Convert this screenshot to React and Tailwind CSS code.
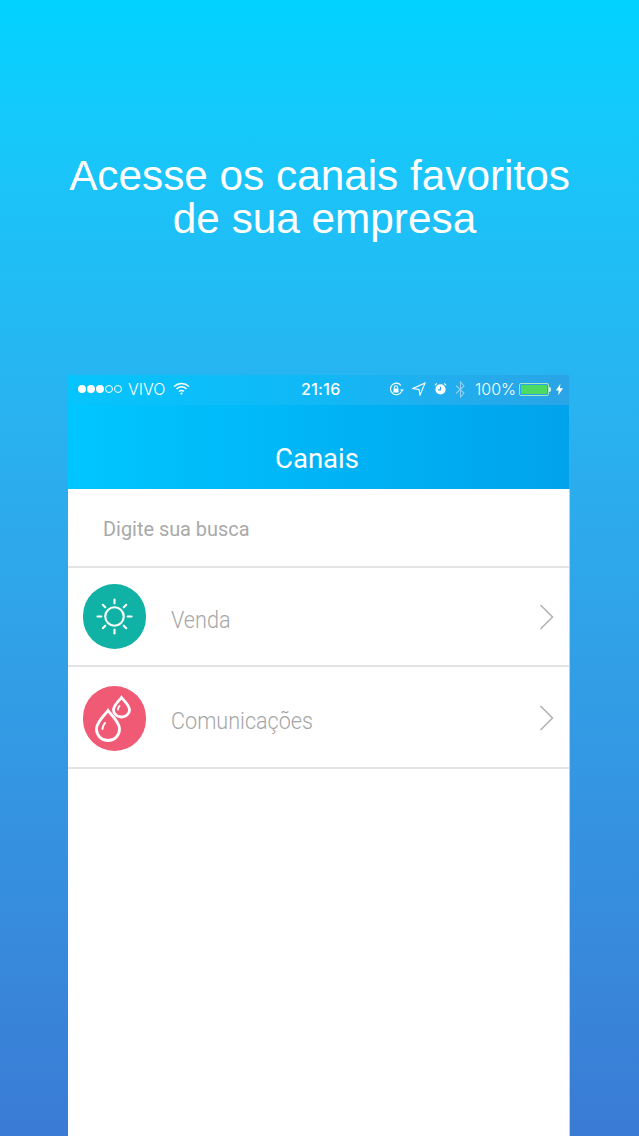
import React from 'react'

function StatusBar() {
  return (
    <div className="h-[30px] flex items-center pl-[10px] pb-[2px] text-white text-[16px] font-['Inter',sans-serif] bg-gradient-to-r from-[#06c4fc] via-[#10b8f6] to-[#2aa4e6]">
      <div className="flex items-center w-[223px]">
        <div className="flex items-center gap-[1px]">
          <span className="w-[8px] h-[8px] rounded-full bg-white"></span>
          <span className="w-[8px] h-[8px] rounded-full bg-white"></span>
          <span className="w-[8px] h-[8px] rounded-full bg-white"></span>
          <span className="w-[8px] h-[8px] rounded-full border border-white"></span>
          <span className="w-[8px] h-[8px] rounded-full border border-white"></span>
        </div>
        <span className="ml-[6px] font-light">VIVO</span>
        <svg className="ml-[8px] mb-[2px]" width="17" height="13" viewBox="0 0 17 13" fill="none" stroke="white" strokeWidth="1.5">
          <path d="M1 4.5C5.500 .5 11.500 .5 16 4.500" />
          <path d="M3.500 7C6.500 4.400 10.500 4.400 13.500 7" />
          <path d="M6 9.500C7.500 8.300 9.500 8.300 11 9.500" />
          <circle cx="8.500" cy="11.500" r="1.100" fill="white" stroke="none" />
        </svg>
      </div>
      <span className="w-[40px] font-medium text-[16px] leading-none tracking-[0.3px]">21:16</span>
      <div className="flex items-center ml-[48px]">
        <svg width="15" height="15" viewBox="0 0 15 15" fill="none" stroke="white" strokeWidth="1.1">
          <path d="M12.500 9.500A5.800 5.800 0 1 1 12 3.500" />
          <path d="M11 7.500h4l-2 2.200z" fill="white" stroke="none" />
          <rect x="4.500" y="6.500" width="5" height="4" fill="white" stroke="none" />
          <path d="M5.500 6.500V5.200a1.500 1.500 0 0 1 3 0V6.500" />
        </svg>
        <svg className="ml-[8px]" width="14" height="14" viewBox="0 0 14 14" fill="none" stroke="white" strokeWidth="1.1">
          <path d="M13 1L1 6.500L7 7.500L8 13Z" />
        </svg>
        <svg className="ml-[8px]" width="13" height="14" viewBox="0 0 14 14">
          <circle cx="7" cy="7.500" r="5.500" fill="white" />
          <path d="M7 4.500V8H4.500" fill="none" stroke="#2aa4e6" strokeWidth="1.2" />
          <path d="M1 3L3 1M13 3L11 1" stroke="white" strokeWidth="1.2" />
        </svg>
        <svg className="ml-[8px]" width="11" height="17" viewBox="0 0 11 17" fill="none" stroke="#8fd0f3" strokeWidth="1.1">
          <path d="M1 4.500L9 12L5.500 16V1L9 5L1 12.500" />
        </svg>
        <span className="ml-[9px] font-light w-[40px] whitespace-nowrap">100%</span>
        <div className="ml-[4px] w-[30px] h-[13px] rounded-[2px] border border-[#a8e6c0] p-[1px]">
          <div className="w-full h-full bg-[#4cd964] rounded-[1px]"></div>
        </div>
        <span className="w-[2px] h-[5px] bg-white/80 rounded-r-sm"></span>
        <svg className="ml-[5px]" width="7" height="13" viewBox="0 0 8 13">
          <path d="M5 0L0 7.500H3.200L2.500 13L8 5.200H4.500Z" fill="white" />
        </svg>
      </div>
    </div>
  )
}

function Row({ label, color, icon, rowClass }) {
  return (
    <div className={`flex items-center border-b-2 border-[#e3e3e3] pl-[15px] pr-[15px] ${rowClass}`}>
      <div className={`w-[63px] h-[65px] rounded-full flex items-center justify-center ${color}`}>
        {icon}
      </div>
      <span className="ml-[25px] pt-[6px] text-[#a6a6a6] text-[24px] font-['Roboto',sans-serif] font-light scale-x-[0.9] origin-left">{label}</span>
      <svg className="ml-auto" width="15" height="26" viewBox="0 0 15 26" fill="none" stroke="#b3b3b3" strokeWidth="1.6">
        <path d="M1.500 1L13.500 13L1.500 25" />
      </svg>
    </div>
  )
}

function SunIcon() {
  return (
    <svg width="37" height="37" viewBox="0 0 38 38" fill="none" stroke="white" strokeWidth="2.2" strokeLinecap="round">
      <circle cx="19" cy="19" r="9.500" />
      <path d="M19 1.500V5.500M19 32.500V36.500M1.500 19H5.500M32.500 19H36.500M7 7L9.500 9.500M28.500 28.500L31 31M7 31L9.500 28.500M28.500 9.500L31 7" />
    </svg>
  )
}

function DropsIcon() {
  return (
    <svg className="mr-[3px]" width="36" height="47" viewBox="0 0 36 47" fill="none" stroke="white" strokeWidth="2.800">
      <path d="M13 15.500C9 21 1.500 27 1.500 34C1.500 40.500 6.500 45.500 13 45.500C19.500 45.500 24.500 40.500 24.500 34C24.500 27 17 21 13 15.500Z" />
      <path d="M26.500 2.500C24 6 18.500 10 18.500 15C18.500 19 22.300 22 26.500 22C30.700 22 34.500 19 34.500 15C34.500 10 29 6 26.500 2.500Z" />
      <path d="M7.500 34C7.500 31.500 8.500 29.500 10 28" strokeLinecap="round" strokeWidth="2" />
      <path d="M23 14.500C23 13 23.700 11.800 24.500 11" strokeLinecap="round" strokeWidth="1.800" />
    </svg>
  )
}

export default function App() {
  return (
    <div className="w-[639px] h-[1136px] overflow-hidden flex flex-col bg-gradient-to-b from-[#00d2ff] to-[#3a7bd5]">
      <h1 className="mt-[154px] h-[221px] text-white text-[42.3px] leading-[43px] text-center font-['Liberation_Sans',sans-serif] font-normal">
        Acesse os canais favoritos
        <span className="block pl-[10px]">de sua empresa</span>
      </h1>
      <div className="ml-[68px] w-[502px] flex-1 flex flex-col">
        <div className="w-[501px]">
          <StatusBar />
          <div className="h-[84px] flex items-center justify-center pt-[24px] pr-[3px] text-white text-[27.5px] font-['Roboto',sans-serif] bg-gradient-to-r from-[#00c6ff] to-[#00a3ec]">
            Canais
          </div>
        </div>
        <div className="flex-1 bg-white border-r border-[#d9c9b8]">
          <div className="h-[79px] flex items-center pl-[35px] pt-[5px] border-b-2 border-[#e3e3e3] text-[#a9a9a9] text-[19.9px] font-['Roboto',sans-serif]">
            Digite sua busca
          </div>
          <Row label="Venda" color="bg-[#0fb2a4]" icon={<SunIcon />} rowClass="h-[99px]" />
          <Row label="Comunicações" color="bg-[#f05a75]" icon={<DropsIcon />} rowClass="h-[102px] pt-[2px]" />
        </div>
      </div>
    </div>
  )
}
